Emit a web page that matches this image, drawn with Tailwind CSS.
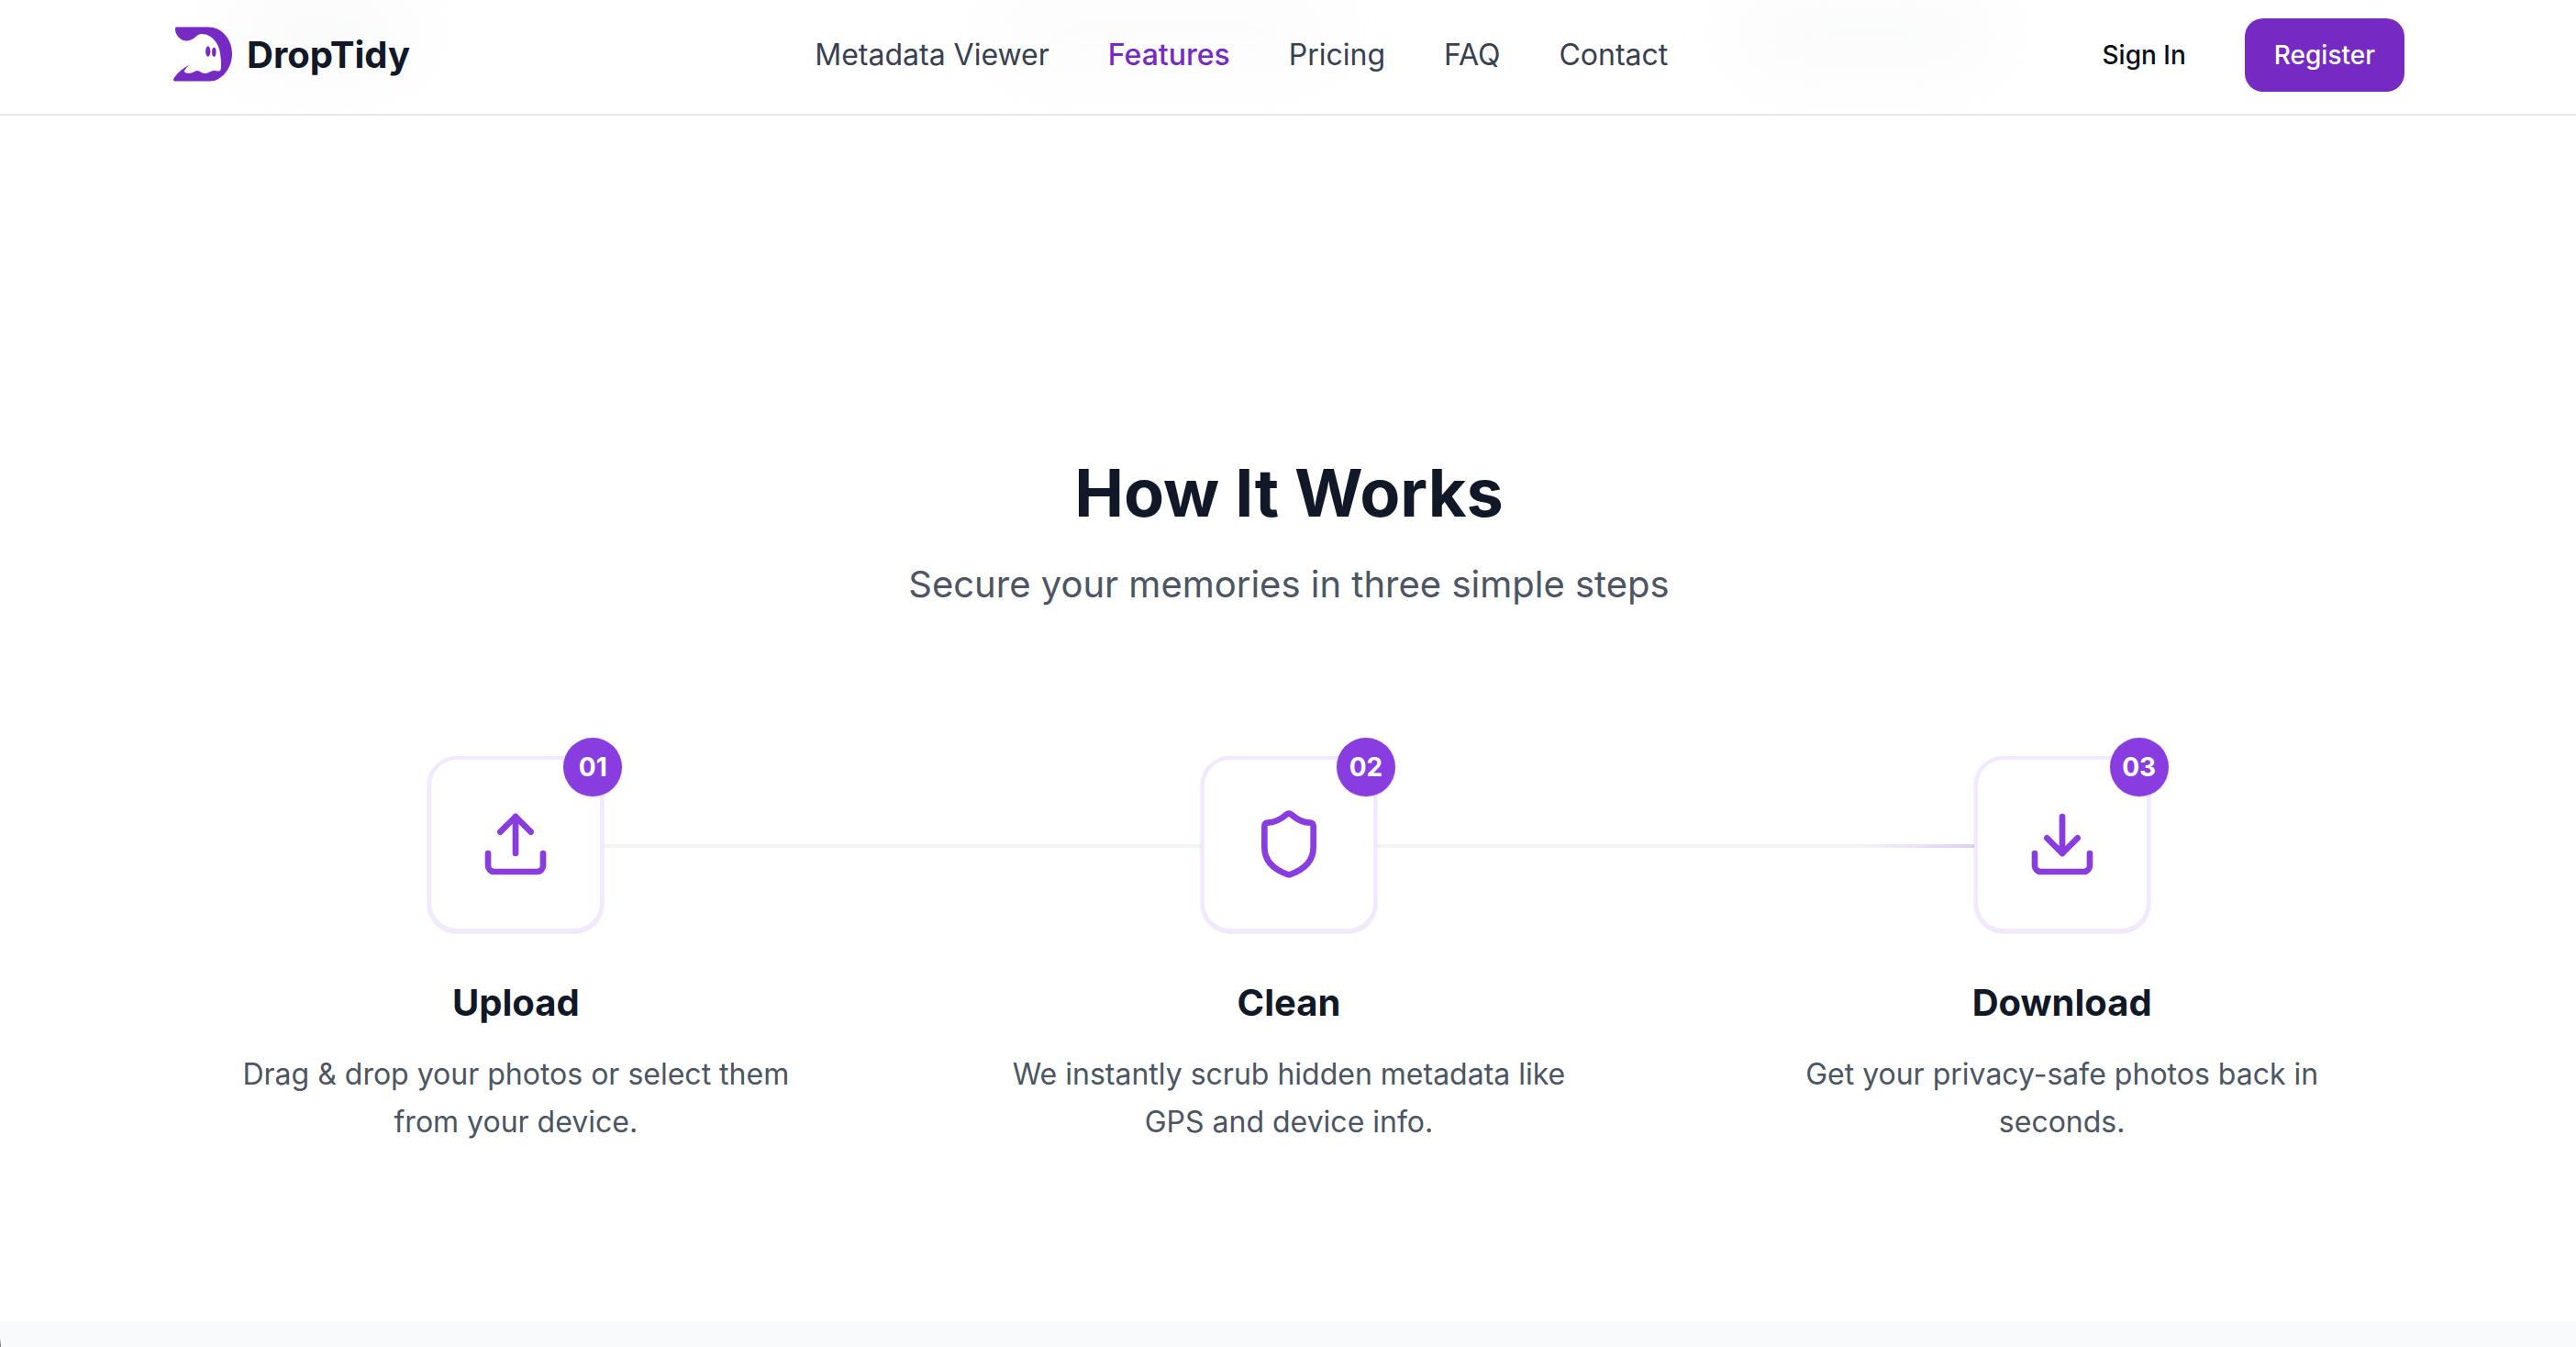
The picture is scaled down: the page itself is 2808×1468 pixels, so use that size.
<!DOCTYPE html>
<html lang="en">
<head>
  <meta charset="UTF-8" />
  <title>DropTidy</title>
  <meta name="viewport" content="width=device-width, initial-scale=1.0" />
  <script src="https://cdn.jsdelivr.net/npm/@tailwindcss/browser@4"></script>
</head>
<body class="bg-white font-['Inter',sans-serif] h-[1468px] overflow-hidden relative">

  <header class="relative h-[126px] pl-[2px] pb-[4px] border-b-2 border-[#e5e7eb] overflow-hidden">
    <div class="absolute left-[250px] top-[5px] w-[200px] h-[60px] rounded-full bg-gray-200/30 blur-2xl"></div>
    <div class="absolute left-[1080px] top-[0px] w-[380px] h-[70px] rounded-full bg-gray-200/15 blur-2xl"></div>
    <div class="absolute left-[1895px] top-[8px] w-[280px] h-[60px] rounded-full bg-gray-200/25 blur-2xl"></div>

    <div class="relative mx-auto w-[2432px] h-full flex items-center justify-between">
      <a class="flex items-center gap-[12px]">
        <svg class="w-[70px] h-[70px] -ml-[2px] -mt-[2px]" viewBox="0 0 70 70">
          <path fill="#7729c4" d="M5 5.5 L40 5.5 C55 5.5 66 19 66 34.5 C66 51 54 64.5 42 64.5 L4 64.5 C2 64.5 1.5 62.5 3 60.5 C7 54.5 13 50 20 46.5 C17 48.5 15 51.5 13.5 54 C17 57 22 56 26 53.5 C29.5 51.5 32 55.5 36 56 C40 56.5 43 53 46 53 C49.5 53 52.5 54.5 53.5 52 C54.5 49 54 42 53.5 38 C53 24 44 13 33 13 C27 13 25 20 17 20.5 C10 21 4 14 4 8 C4 6.5 4.5 5.5 5 5.5 Z"/>
          <ellipse cx="39.7" cy="32" rx="2.6" ry="5.8" fill="#7729c4"/>
          <ellipse cx="46.3" cy="32.7" rx="2.2" ry="5" fill="#7729c4"/>
        </svg>
        <span class="text-[40px] leading-[56px] font-bold text-[#111827]">DropTidy</span>
      </a>

      <nav class="flex items-center gap-[64px] text-[32px] leading-[48px] font-normal text-[#374151]">
        <a>Metadata Viewer</a>
        <a class="text-[#7729c4] font-medium">Features</a>
        <a>Pricing</a>
        <a>FAQ</a>
        <a>Contact</a>
      </nav>

      <div class="flex items-center gap-[32px]">
        <a class="px-[32px] text-[28px] leading-[40px] font-medium text-[#0b0f19]">Sign In</a>
        <a class="flex items-center h-[80px] px-[32px] rounded-[20px] bg-[#7729c4] text-white text-[28px] leading-[40px] font-medium">Register</a>
      </div>
    </div>
  </header>

  <!-- How it works -->
  <section class="pt-[371px] pl-[2px] h-[1314px]">
    <div class="text-center">
      <h2 class="text-[72px] leading-[80px] font-bold text-[#111827]">How It Works</h2>
      <p class="mt-[32px] text-[40px] leading-[56px] text-[#4b5563]">Secure your memories in three simple steps</p>
    </div>

    <div class="relative mx-auto mt-[159px] w-[2432px] grid grid-cols-3 gap-[96px]">
      <div class="absolute left-[374px] right-[374px] top-[96px] h-[4px] bg-[linear-gradient(to_right,#f3f4f6_0%,#f3f4f6_87%,#e2d0f2_94.3%)]"></div>

      <div class="relative flex flex-col items-center text-center">
        <div class="relative flex items-center justify-center w-[192px] h-[192px] rounded-[32px] border-[4px] border-[#f3e8ff] bg-white shadow-sm">
          <span class="absolute -top-[24px] -right-[24px] flex items-center justify-center w-[64px] h-[64px] rounded-full bg-[#893de0] text-white text-[28px] font-bold shadow-sm">01</span>
          <svg class="w-[80px] h-[80px]" viewBox="0 0 24 24" fill="none" stroke="#893de0" stroke-width="2" stroke-linecap="round" stroke-linejoin="round">
            <path d="M21 15v4a2 2 0 0 1-2 2H5a2 2 0 0 1-2-2v-4"/>
            <path d="M17 8l-5-5-5 5"/>
            <path d="M12 3v12"/>
          </svg>
        </div>
        <h3 class="mt-[49px] text-[40px] leading-[56px] font-bold text-[#111827]">Upload</h3>
        <p class="mt-[24px] max-w-[640px] text-[32px] leading-[52px] text-[#4b5563]">Drag &amp; drop your photos or select them from your device.</p>
      </div>

      <div class="relative flex flex-col items-center text-center">
        <div class="relative flex items-center justify-center w-[192px] h-[192px] rounded-[32px] border-[4px] border-[#f3e8ff] bg-white shadow-sm">
          <span class="absolute -top-[24px] -right-[24px] flex items-center justify-center w-[64px] h-[64px] rounded-full bg-[#893de0] text-white text-[28px] font-bold shadow-sm">02</span>
          <svg class="w-[80px] h-[80px]" viewBox="0 0 24 24" fill="none" stroke="#893de0" stroke-width="2" stroke-linecap="round" stroke-linejoin="round">
            <path d="M20 13c0 5-3.5 7.5-7.66 8.95a1 1 0 0 1-.67-.01C7.5 20.5 4 18 4 13V6a1 1 0 0 1 1-1c2 0 4.5-1.2 6.24-2.72a1.17 1.17 0 0 1 1.52 0C14.51 3.81 17 5 19 5a1 1 0 0 1 1 1z"/>
          </svg>
        </div>
        <h3 class="mt-[49px] text-[40px] leading-[56px] font-bold text-[#111827]">Clean</h3>
        <p class="mt-[24px] max-w-[640px] text-[32px] leading-[52px] text-[#4b5563]">We instantly scrub hidden metadata like GPS and device info.</p>
      </div>

      <div class="relative flex flex-col items-center text-center">
        <div class="relative flex items-center justify-center w-[192px] h-[192px] rounded-[32px] border-[4px] border-[#f3e8ff] bg-white shadow-sm">
          <span class="absolute -top-[24px] -right-[24px] flex items-center justify-center w-[64px] h-[64px] rounded-full bg-[#893de0] text-white text-[28px] font-bold shadow-sm">03</span>
          <svg class="w-[80px] h-[80px]" viewBox="0 0 24 24" fill="none" stroke="#893de0" stroke-width="2" stroke-linecap="round" stroke-linejoin="round">
            <path d="M21 15v4a2 2 0 0 1-2 2H5a2 2 0 0 1-2-2v-4"/>
            <path d="M7 10l5 5 5-5"/>
            <path d="M12 15V3"/>
          </svg>
        </div>
        <h3 class="mt-[49px] text-[40px] leading-[56px] font-bold text-[#111827]">Download</h3>
        <p class="mt-[24px] max-w-[640px] text-[32px] leading-[52px] text-[#4b5563]">Get your privacy-safe photos back in seconds.</p>
      </div>
    </div>
  </section>

  <div class="h-[28px] bg-[#f9fafb]"></div>
  <div class="absolute left-0 bottom-0 w-[1px] h-[10px] bg-linear-to-b from-transparent to-gray-500"></div>
</body>
</html>
